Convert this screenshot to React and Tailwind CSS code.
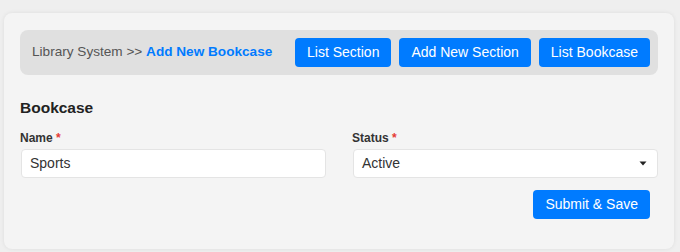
import React from "react";

const navButtons = ["List Section", "Add New Section", "List Bookcase"];

const App = () => {
  return (
    <div className="min-h-[252px] w-[680px] bg-[#efefef] pt-[13px] pl-1 pr-[6px] font-['Liberation_Sans',Arial,sans-serif]">
      <div className="h-[236px] rounded-lg bg-[#f4f4f4] px-4 pt-[17px] shadow-[0_0_4px_rgba(0,0,0,0.08)]">
        <div className="flex h-[45px] items-center justify-between rounded-lg bg-[#e0e0e0] pl-3 pr-2">
          <div className="text-[13.6px] text-[#555]">
            Library System &gt;&gt;{" "}
            <span className="font-bold text-[#007bff]">Add New Bookcase</span>
          </div>
          <div className="flex gap-2">
            {navButtons.map((label) => (
              <button
                key={label}
                className="h-[29px] rounded bg-[#007bff] px-3 text-[14px] text-white"
              >
                {label}
              </button>
            ))}
          </div>
        </div>

        <h2 className="mt-[23px] text-[15.5px] leading-[19px] font-bold text-[#222]">Bookcase</h2>

        <div className="mt-[14px] grid grid-cols-2 gap-[26px]">
          <div>
            <label className="block text-[12px] leading-[14px] font-bold text-[#333]">
              Name <span className="text-[#e53935]">*</span>
            </label>
            <div className="mt-[4px] ml-px flex h-[29px] items-center rounded border border-[#e4e4e4] bg-white px-2 text-[14px] text-[#333]">
              Sports
            </div>
          </div>
          <div>
            <label className="block text-[12px] leading-[14px] font-bold text-[#333]">
              Status <span className="text-[#e53935]">*</span>
            </label>
            <div className="mt-[4px] ml-px flex h-[29px] items-center justify-between rounded border border-[#e4e4e4] bg-white pl-2 pr-[10px] text-[14px] text-[#333]">
              <span>Active</span>
              <svg width="8" height="5" viewBox="0 0 8 5">
                <path d="M0.5 0.5 L7.5 0.5 L4 4.5 Z" fill="#222" />
              </svg>
            </div>
          </div>
        </div>

        <div className="mt-[12px] flex justify-end pr-2">
          <button className="h-[29px] rounded bg-[#007bff] px-3 text-[14px] text-white">
            Submit &amp; Save
          </button>
        </div>
      </div>
    </div>
  );
};

export default App;
